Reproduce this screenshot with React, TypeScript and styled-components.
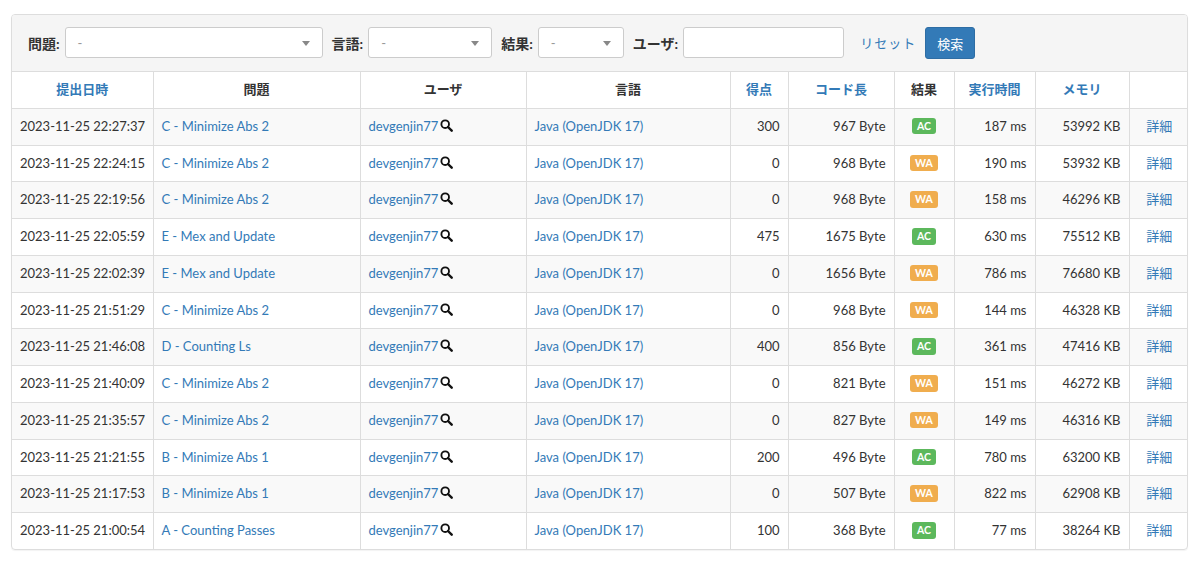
import React from "react";
import styled, { createGlobalStyle } from "styled-components";

const GlobalStyle = createGlobalStyle`
  body {
    margin: 0;
    background: #fff;
    font-family: Lato, "Noto Sans CJK JP", "Helvetica Neue", sans-serif;
    font-size: 13px;
    color: #333;
  }
`;

type Submission = {
  time: string;
  task: string;
  score: number;
  length: number;
  result: "AC" | "WA";
  exec: number;
  memory: number;
};

const rows: Submission[] = [
  { time: "2023-11-25 22:27:37", task: "C - Minimize Abs 2", score: 300, length: 967, result: "AC", exec: 187, memory: 53992 },
  { time: "2023-11-25 22:24:15", task: "C - Minimize Abs 2", score: 0, length: 968, result: "WA", exec: 190, memory: 53932 },
  { time: "2023-11-25 22:19:56", task: "C - Minimize Abs 2", score: 0, length: 968, result: "WA", exec: 158, memory: 46296 },
  { time: "2023-11-25 22:05:59", task: "E - Mex and Update", score: 475, length: 1675, result: "AC", exec: 630, memory: 75512 },
  { time: "2023-11-25 22:02:39", task: "E - Mex and Update", score: 0, length: 1656, result: "WA", exec: 786, memory: 76680 },
  { time: "2023-11-25 21:51:29", task: "C - Minimize Abs 2", score: 0, length: 968, result: "WA", exec: 144, memory: 46328 },
  { time: "2023-11-25 21:46:08", task: "D - Counting Ls", score: 400, length: 856, result: "AC", exec: 361, memory: 47416 },
  { time: "2023-11-25 21:40:09", task: "C - Minimize Abs 2", score: 0, length: 821, result: "WA", exec: 151, memory: 46272 },
  { time: "2023-11-25 21:35:57", task: "C - Minimize Abs 2", score: 0, length: 827, result: "WA", exec: 149, memory: 46316 },
  { time: "2023-11-25 21:21:55", task: "B - Minimize Abs 1", score: 200, length: 496, result: "AC", exec: 780, memory: 63200 },
  { time: "2023-11-25 21:17:53", task: "B - Minimize Abs 1", score: 0, length: 507, result: "WA", exec: 822, memory: 62908 },
  { time: "2023-11-25 21:00:54", task: "A - Counting Passes", score: 100, length: 368, result: "AC", exec: 77, memory: 38264 },
];

const Page = styled.div`
  padding: 14px 12px 14px 11px;
`;

const Panel = styled.div`
  border: 1px solid #ddd;
  border-radius: 4px;
  box-shadow: 0 1px 1px rgba(0, 0, 0, 0.05);
  overflow: hidden;
`;

const FilterBar = styled.form`
  display: flex;
  align-items: center;
  background: #f5f5f5;
  padding: 11px 15px 12px 16px;
  border-bottom: 1px solid #ddd;
`;

const Field = styled.label`
  display: flex;
  align-items: center;
  margin-right: 9px;
  font-weight: 700;
  font-size: 14px;
  color: #333;
`;

const FieldName = styled.span`
  margin-right: 5px;
`;

const SelectBox = styled.div<{ $w: number }>`
  position: relative;
  width: ${(p) => p.$w}px;
  height: 31px;
  box-sizing: border-box;
  background: #fff;
  border: 1px solid #ccc;
  border-radius: 3px;
  display: flex;
  align-items: center;
  padding: 0 12px;
  font-weight: 400;
  color: #999;
  font-size: 13px;
`;

const Caret = styled.span`
  position: absolute;
  right: 12px;
  top: 13px;
  width: 0;
  height: 0;
  border-left: 4px solid transparent;
  border-right: 4px solid transparent;
  border-top: 5px solid #888;
`;

const TextInput = styled.div`
  width: 161px;
  height: 31px;
  box-sizing: border-box;
  background: #fff;
  border: 1px solid #ccc;
  border-radius: 3px;
`;

const ResetLink = styled.a`
  color: #337ab7;
  font-size: 13px;
  letter-spacing: 1px;
  margin: 0 9px 0 7px;
  text-decoration: none;
`;

const SearchButton = styled.button`
  height: 32px;
  width: 50px;
  background: #337ab7;
  border: 1px solid #2e6da4;
  border-radius: 3px;
  color: #fff;
  font-family: inherit;
  font-size: 13px;
  padding: 0;
  margin-top: 1px;
`;

const Table = styled.table`
  width: 100%;
  border-collapse: collapse;
  table-layout: fixed;
  font-size: 13px;
`;

const Th = styled.th<{ $link?: boolean }>`
  padding: 8px;
  line-height: 19.75px;
  font-weight: 700;
  text-align: center;
  color: ${(p) => (p.$link ? "#337ab7" : "#333")};
  border-left: 1px solid #ddd;
  &:first-child {
    border-left: none;
  }
`;

const Tr = styled.tr`
  border-top: 1px solid #ddd;
  &:nth-child(odd) {
    background: #f9f9f9;
  }
`;

const Td = styled.td<{ $align?: "left" | "right" | "center" }>`
  padding: 8px;
  line-height: 19.75px;
  text-align: ${(p) => p.$align || "left"};
  border-left: 1px solid #ddd;
  white-space: nowrap;
  overflow: hidden;
  &:first-child {
    border-left: none;
  }
`;

const Link = styled.a`
  color: #337ab7;
  text-decoration: none;
`;

const Badge = styled.span<{ $ok: boolean }>`
  display: inline-block;
  background: ${(p) => (p.$ok ? "#5cb85c" : "#f0ad4e")};
  color: #fff;
  font-size: 10.5px;
  font-weight: 700;
  line-height: 1;
  padding: 3px 5px 3px;
  border-radius: 3px;
  vertical-align: 1px;
`;

const SearchIcon = () => (
  <svg width="13" height="13" viewBox="0 0 14 14" style={{ marginLeft: 2, verticalAlign: -1 }}>
    <circle cx="5.6" cy="5.6" r="4.1" fill="none" stroke="#111" strokeWidth="2" />
    <path d="M8.6 8.6 L12.6 12.6" stroke="#111" strokeWidth="2.6" strokeLinecap="round" />
  </svg>
);

const cols = [141, 207, 166, 204, 58, 106, 60, 81, 94, 60];

export default function App() {
  return (
    <Page>
      <GlobalStyle />
      <Panel>
        <FilterBar>
          <Field>
            <FieldName>問題:</FieldName>
            <SelectBox $w={258}>
              -<Caret />
            </SelectBox>
          </Field>
          <Field>
            <FieldName>言語:</FieldName>
            <SelectBox $w={124}>
              -<Caret />
            </SelectBox>
          </Field>
          <Field>
            <FieldName>結果:</FieldName>
            <SelectBox $w={86}>
              -<Caret />
            </SelectBox>
          </Field>
          <Field>
            <FieldName>ユーザ:</FieldName>
            <TextInput />
          </Field>
          <ResetLink>リセット</ResetLink>
          <SearchButton type="button">検索</SearchButton>
        </FilterBar>
        <Table>
          <colgroup>
            {cols.map((w, i) => (
              <col key={i} style={{ width: w }} />
            ))}
          </colgroup>
          <thead>
            <tr>
              <Th $link>提出日時</Th>
              <Th>問題</Th>
              <Th>ユーザ</Th>
              <Th>言語</Th>
              <Th $link>得点</Th>
              <Th $link>コード長</Th>
              <Th>結果</Th>
              <Th $link>実行時間</Th>
              <Th $link>メモリ</Th>
              <Th></Th>
            </tr>
          </thead>
          <tbody>
            {rows.map((r, i) => (
              <Tr key={i}>
                <Td>{r.time}</Td>
                <Td>
                  <Link>{r.task}</Link>
                </Td>
                <Td>
                  <Link>devgenjin77</Link>
                  <SearchIcon />
                </Td>
                <Td>
                  <Link>Java (OpenJDK 17)</Link>
                </Td>
                <Td $align="right">{r.score}</Td>
                <Td $align="right">{r.length} Byte</Td>
                <Td $align="center">
                  <Badge $ok={r.result === "AC"}>{r.result}</Badge>
                </Td>
                <Td $align="right">{r.exec} ms</Td>
                <Td $align="right">{r.memory} KB</Td>
                <Td $align="center">
                  <Link>詳細</Link>
                </Td>
              </Tr>
            ))}
          </tbody>
        </Table>
      </Panel>
    </Page>
  );
}
